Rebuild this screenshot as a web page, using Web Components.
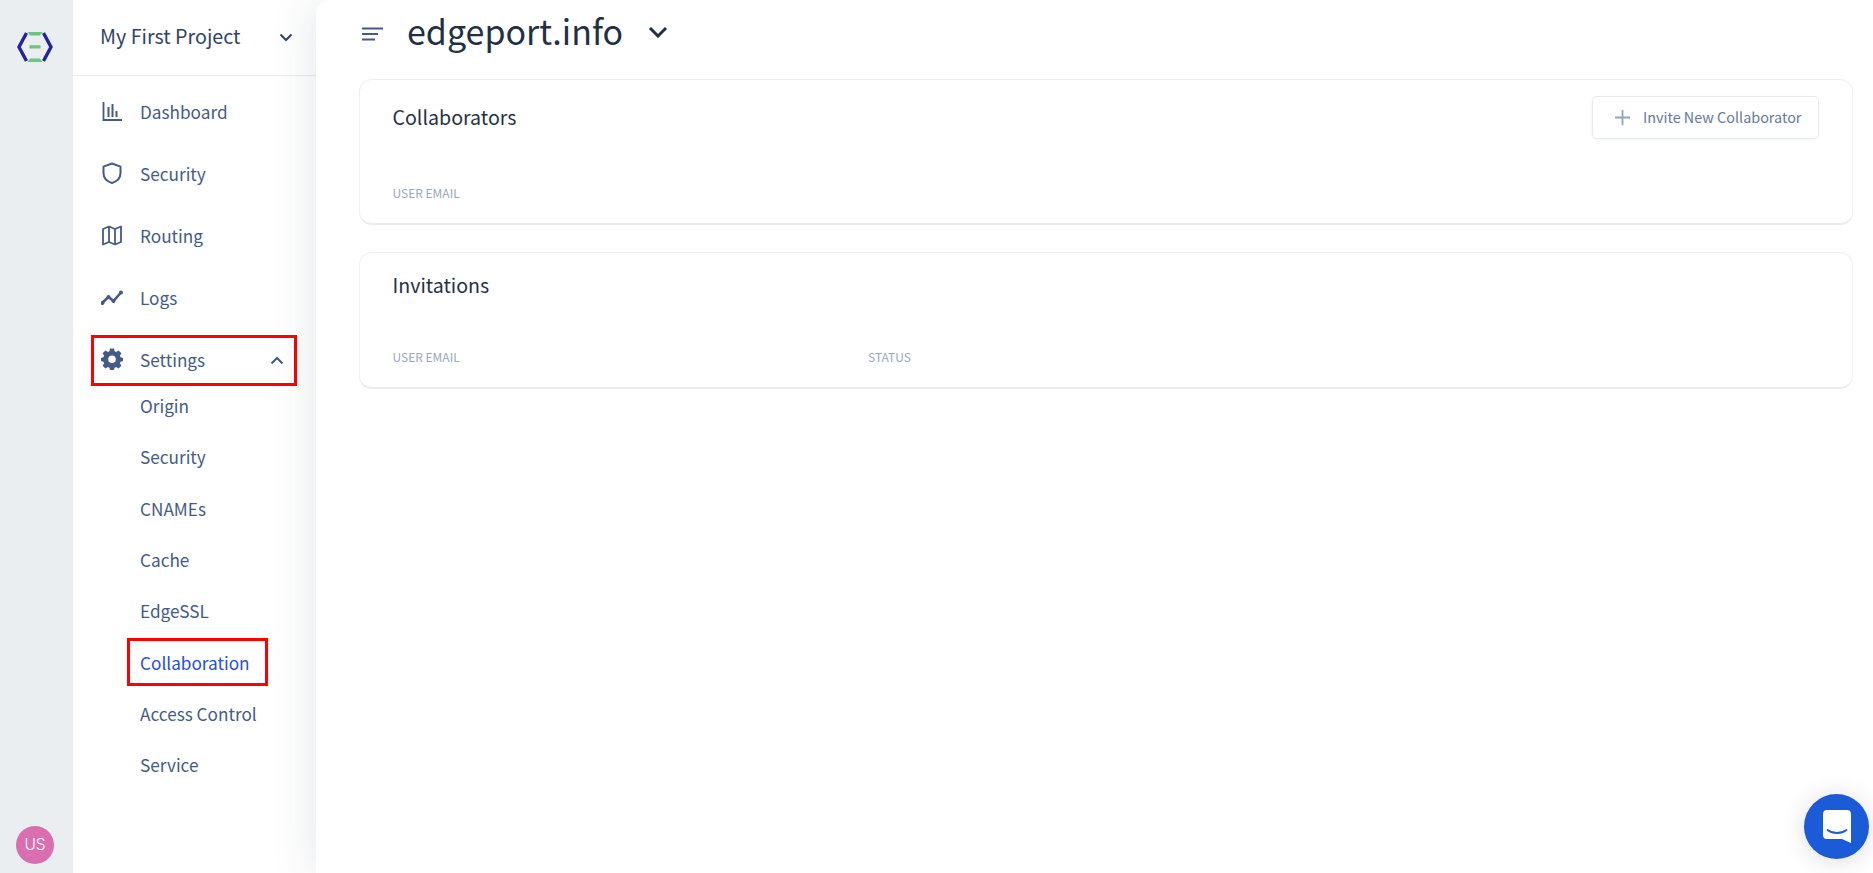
<!doctype html>
<html lang="en"><head><meta charset="utf-8"><title>Collaboration</title>
<style>
html,body{margin:0;height:100%;overflow:hidden;background:#fff}
body{font-family:"Noto Sans CJK SC","Source Sans Pro","Noto Sans",sans-serif}
</style></head><body>
<app-shell>
  <icon-rail slot="rail"></icon-rail>
  <side-nav slot="nav">
    <project-switch>My First Project</project-switch>
    <nav-item icon="chart">Dashboard</nav-item>
    <nav-item icon="shield">Security</nav-item>
    <nav-item icon="map">Routing</nav-item>
    <nav-item icon="trend">Logs</nav-item>
    <nav-item icon="gear" open marked>Settings</nav-item>
    <sub-item style="margin-top:-12px">Origin</sub-item>
    <sub-item>Security</sub-item>
    <sub-item>CNAMEs</sub-item>
    <sub-item>Cache</sub-item>
    <sub-item>EdgeSSL</sub-item>
    <sub-item active marked>Collaboration</sub-item>
    <sub-item>Access Control</sub-item>
    <sub-item>Service</sub-item>
  </side-nav>
  <main-pane slot="main">
    <page-header>edgeport.info</page-header>
    <panel-card heading="Collaborators" columns="USER EMAIL" head="31" body="104" style="height:146px"><invite-button slot="action">Invite New Collaborator</invite-button></panel-card>
    <panel-card heading="Invitations" columns="USER EMAIL|STATUS" head="26" body="95" style="height:137px;margin-top:27px"></panel-card>
  </main-pane>
</app-shell>
<chat-launcher></chat-launcher>
<script>
const ICONS={
 chart:'<path d="M2.500 2v18H21" fill="none" stroke-width="1.800"/><path d="M7.500 7v10M11.500 4v13M15.500 11v6" fill="none" stroke-width="2"/>',
 shield:'<path d="M11 1.500 19.500 4.600v6.400c0 4.800-3.600 8.400-8.500 10-4.900-1.600-8.500-5.200-8.500-10V4.600z" fill="none" stroke-width="2" stroke-linejoin="round"/>',
 map:'<path d="M2 5 8 2.500l6 2.500 6-2.500V18l-6 2.500L8 18l-6 2.500zM8 2.500V18M14 5v15.500" fill="none" stroke-width="1.800" stroke-linejoin="round"/>',
 trend:'<path d="M1 17l6.500-6 5 4L20 6.500" fill="none" stroke-width="2.600"/><circle cx="1.500" cy="17" r="2" stroke="none" fill="currentColor"/><circle cx="7.500" cy="11" r="2" stroke="none" fill="currentColor"/><circle cx="12.500" cy="15" r="2" stroke="none" fill="currentColor"/><circle cx="20" cy="6.500" r="2" stroke="none" fill="currentColor"/>',
 gear:'<path stroke="none" fill="currentColor" fill-rule="evenodd" d="M9 .5h4l.6 2.800 1.500.7L17.600 2.500l2.800 2.800-1.500 2.500.7 1.500L22 9.900v3.200l-2.400.6-.7 1.500 1.500 2.500-2.800 2.800-2.500-1.500-1.500.7L13 22H9l-.6-2.300-1.500-.7-2.500 1.500-2.800-2.800 1.500-2.500-.7-1.500L0 13.100V9.900l2.400-.6.7-1.500-1.500-2.500L4.400 2.500l2.500 1.500 1.500-.7zM11 7.500a3.800 3.800 0 1 0 0 7.600 3.800 3.800 0 0 0 0-7.600z"/>'
};
const mark=':host([marked])::after{content:"";position:absolute;border:3px solid #f00;box-sizing:border-box;pointer-events:none}';
customElements.define('app-shell',class extends HTMLElement{constructor(){super();this.attachShadow({mode:'open'}).innerHTML=`<style>
:host{display:grid;grid-template-columns:73px 243px 1fr;height:873px;width:1873px;overflow:hidden}
</style><slot name="rail"></slot><slot name="nav"></slot><slot name="main"></slot>`}});
customElements.define('icon-rail',class extends HTMLElement{constructor(){super();this.attachShadow({mode:'open'}).innerHTML=`<style>
:host{display:flex;flex-direction:column;align-items:center;justify-content:space-between;background:#ebeef1;height:873px;padding:32px 0 9px;box-sizing:border-box}
svg{display:block;margin-left:-3px}
.av{width:38px;height:38px;border-radius:50%;background:#d96fb1;color:#fff;font:300 15.500px/38px "Inter","Noto Sans",sans-serif;text-align:center;margin-left:-3px}
</style>
<svg width="36" height="30" viewBox="0 0 36 30"><path d="M9.500 1 2 15l7.500 14" fill="none" stroke="#23239b" stroke-width="3.400"/><path d="M26.500 1 34 15l-7.500 14" fill="none" stroke="#23239b" stroke-width="3.400"/><path d="M10.500 0h15l-2.500 3.500H13zM13 26.500h10l2.500 3.500h-15zM12.500 13.200h11v3.400h-11z" fill="#6cc47f"/></svg>
<div class="av">US</div>`}});
customElements.define('side-nav',class extends HTMLElement{constructor(){super();this.attachShadow({mode:'open'}).innerHTML=`<style>
:host{display:block;background:#fff;height:873px}
</style><slot></slot>`}});
customElements.define('project-switch',class extends HTMLElement{constructor(){super();this.attachShadow({mode:'open'}).innerHTML=`<style>
:host{display:flex;align-items:center;justify-content:space-between;height:75px;padding:0 23px 0 27px;border-bottom:1px solid #e8ebef;font-size:19.700px;color:#2f4468;margin-bottom:6px}
span{display:block;padding-bottom:4px}
svg{display:block;margin-bottom:1px}
</style><span><slot></slot></span><svg width="14" height="9" viewBox="0 0 14 9"><path d="M1.500 1.500 7 7l5.500-5.500" fill="none" stroke="#2f4468" stroke-width="2"/></svg>`}});
customElements.define('nav-item',class extends HTMLElement{constructor(){super();const i=this.getAttribute('icon');const open=this.hasAttribute('open');this.attachShadow({mode:'open'}).innerHTML=`<style>
:host{display:flex;align-items:center;height:62px;padding-left:28px;font-size:17.200px;color:#435b86;position:relative}
.ic{width:22px;height:22px;margin-right:17px;flex:none;color:#435b86;stroke:#435b86;display:block;position:relative;top:-2px}
span{display:block;padding-bottom:4px}
.up{position:absolute;left:197px;top:26px}
${mark}
:host([marked])::after{left:18px;top:5px;width:206px;height:51px}
</style><svg class="ic" viewBox="0 0 22 22">${ICONS[i]}</svg><span><slot></slot></span>${open?'<svg class="up" width="14" height="9" viewBox="0 0 14 9"><path d="M1.500 7.500 7 2l5.500 5.500" fill="none" stroke="#435b86" stroke-width="2"/></svg>':''}`}});
customElements.define('sub-item',class extends HTMLElement{constructor(){super();this.attachShadow({mode:'open'}).innerHTML=`<style>
:host{display:flex;align-items:center;height:51.300px;padding-left:67px;font-size:17.200px;color:#435b86;position:relative}
:host([active]){color:#2850cc}
${mark}
:host([marked])::after{left:54px;top:2px;width:141px;height:48px}
</style><span><slot></slot></span>`}});
customElements.define('main-pane',class extends HTMLElement{constructor(){super();this.attachShadow({mode:'open'}).innerHTML=`<style>
:host{display:block;background:#fff;height:873px;border-top-left-radius:14px;box-shadow:0 0 46px rgba(40,55,80,.13);padding:0 20px 0 44px;position:relative;box-sizing:border-box}
</style><slot></slot>`}});
customElements.define('page-header',class extends HTMLElement{constructor(){super();this.attachShadow({mode:'open'}).innerHTML=`<style>
:host{display:flex;align-items:center;height:79px;padding-bottom:15px;box-sizing:border-box;color:#1f3047;font-size:34px}
.m{display:block;margin:4px 23px 0 2px}
.c{display:block;margin-left:25px}
h1{font:inherit;margin:0;padding-bottom:3px}
</style><svg class="m" width="22" height="14" viewBox="0 0 22 14"><path d="M0 1.500h21M0 7h16M0 12.500h13" stroke="#435b86" stroke-width="2"/></svg><h1><slot></slot></h1><svg class="c" width="20" height="12" viewBox="0 0 20 12"><path d="M2 2l8 8 8-8" fill="none" stroke="#1f3047" stroke-width="3"/></svg>`}});
customElements.define('panel-card',class extends HTMLElement{constructor(){super();const cols=(this.getAttribute('columns')||'').split('|');const head=+this.getAttribute('head');const body=+this.getAttribute('body');this.attachShadow({mode:'open'}).innerHTML=`<style>
:host{display:block;border:1px solid #edf0f3;border-bottom:2px solid #e8ebef;border-radius:13px;background:#fff;box-sizing:border-box;padding:0 33px 0 32.500px;position:relative;margin-left:-1px}
.top{display:flex;justify-content:space-between;align-items:flex-start;height:${body}px}
h2{font-weight:400;font-size:19.600px;margin:${head-7}px 0 0;color:#1f3047;line-height:26px}
.cols{display:grid;grid-template-columns:475.500px 1fr;font-size:12px;color:#98a7bf;line-height:18px}
::slotted([slot=action]){margin-top:16px}
</style><div class="top"><h2>${this.getAttribute('heading')}</h2><slot name="action"></slot></div><div class="cols">${cols.map(c=>`<span>${c}</span>`).join('')}</div>`}});
customElements.define('invite-button',class extends HTMLElement{constructor(){super();this.attachShadow({mode:'open'}).innerHTML=`<style>
:host{display:flex;align-items:center;width:227px;height:43px;box-sizing:border-box;border:1px solid #e8ecf1;border-radius:5px;box-shadow:0 1px 3px rgba(40,55,80,.06);background:#fff;padding-left:22px;color:#66789b;font-size:14.400px;white-space:nowrap}
svg{display:block;margin-right:13px}
span{display:block;padding-bottom:3px}
</style><svg width="15" height="15" viewBox="0 0 15 15"><path d="M7.500 0v15M0 7.500h15" stroke="#93a3bd" stroke-width="1.800"/></svg><span><slot></slot></span>`}});
customElements.define('chat-launcher',class extends HTMLElement{constructor(){super();this.attachShadow({mode:'open'}).innerHTML=`<style>
:host{position:fixed;left:1804px;top:794px;width:65px;height:65px;border-radius:50%;background:#1c5bd8;box-shadow:0 2px 24px rgba(0,0,0,.14);display:flex;align-items:center;justify-content:center}
svg{display:block}
</style><svg width="28" height="33" viewBox="0 0 28 33"><path d="M4 0h20a4 4 0 0 1 4 4v29l-9-4H4a4 4 0 0 1-4-4V4a4 4 0 0 1 4-4z" fill="#fff"/><path d="M4.500 20c5.500 4 13.500 4 19 0" fill="none" stroke="#1c5bd8" stroke-width="1.800" stroke-linecap="round"/></svg>`}});
</script>
</body></html>
